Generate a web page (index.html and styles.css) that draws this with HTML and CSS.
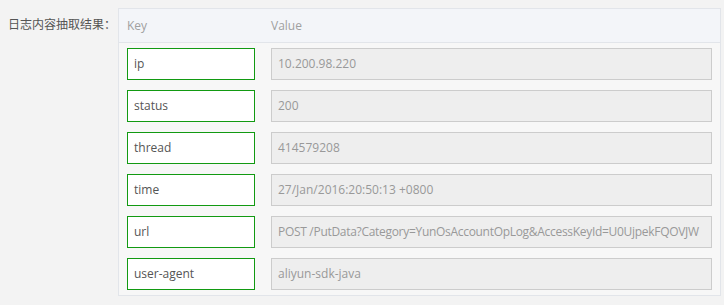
FILE: index.html
```html
<!DOCTYPE html>
<html lang="zh">
<head>
<meta charset="utf-8">
<link rel="stylesheet" href="styles.css">
</head>
<body>
<div class="form-row">
  <div class="form-label">日志内容抽取结果：</div>
  <div class="kv-panel">
    <div class="kv-head">
      <div class="col-key">Key</div>
      <div class="col-val">Value</div>
    </div>
    <div class="kv-body">
      <div class="kv-row"><div class="key-box">ip</div><div class="val-box">10.200.98.220</div></div>
      <div class="kv-row"><div class="key-box">status</div><div class="val-box">200</div></div>
      <div class="kv-row"><div class="key-box">thread</div><div class="val-box">414579208</div></div>
      <div class="kv-row"><div class="key-box">time</div><div class="val-box">27/Jan/2016:20:50:13 +0800</div></div>
      <div class="kv-row"><div class="key-box">url</div><div class="val-box url">POST /PutData?Category=YunOsAccountOpLog&amp;AccessKeyId=U0UjpekFQOVJW</div></div>
      <div class="kv-row"><div class="key-box">user-agent</div><div class="val-box">aliyun-sdk-java</div></div>
    </div>
  </div>
</div>
</body>
</html>
```
FILE: styles.css
```css
html, body {
  margin: 0;
  padding: 0;
  background: #f3f3f3;
  font-family: "Open Sans", "Noto Sans", "Noto Sans CJK SC", sans-serif;
  font-size: 12px;
}
.form-row {
  display: flex;
  align-items: flex-start;
  padding-top: 8px;
}
.form-label {
  width: 110px;
  padding-left: 8px;
  box-sizing: border-box;
  color: #555;
  height: 33px;
  line-height: 31px;
  white-space: nowrap;
  font-family: "Noto Sans CJK SC", sans-serif;
}
.kv-panel {
  width: 603px;
  box-sizing: border-box;
  margin-left: 8px;
  border: 1px solid #e2e5ea;
  background: #f7f7f7;
}
.kv-head {
  display: flex;
  gap: 16px;
  height: 33px;
  line-height: 33px;
  background: #f3f5f9;
  border-bottom: 1px solid #e2e5ea;
  padding: 0 8px;
  color: #a0a0a0;
}
.col-key { width: 128px; }
.col-val { flex: 1; }
.kv-body {
  display: flex;
  flex-direction: column;
  gap: 10px;
  padding: 5px 8px 5px 8px;
}
.kv-row {
  display: flex;
  gap: 16px;
}
.key-box, .val-box {
  height: 32px;
  box-sizing: border-box;
  line-height: 30px;
  padding: 0 6px;
  white-space: nowrap;
  overflow: hidden;
}
.key-box {
  width: 128px;
  border: 1px solid #129a12;
  background: #fff;
  color: #555;
}
.val-box {
  width: 441px;
  border: 1px solid #cccccc;
  background: #eeeeee;
  color: #999;
}
.val-box.url {
  letter-spacing: -0.3px;
}
```
